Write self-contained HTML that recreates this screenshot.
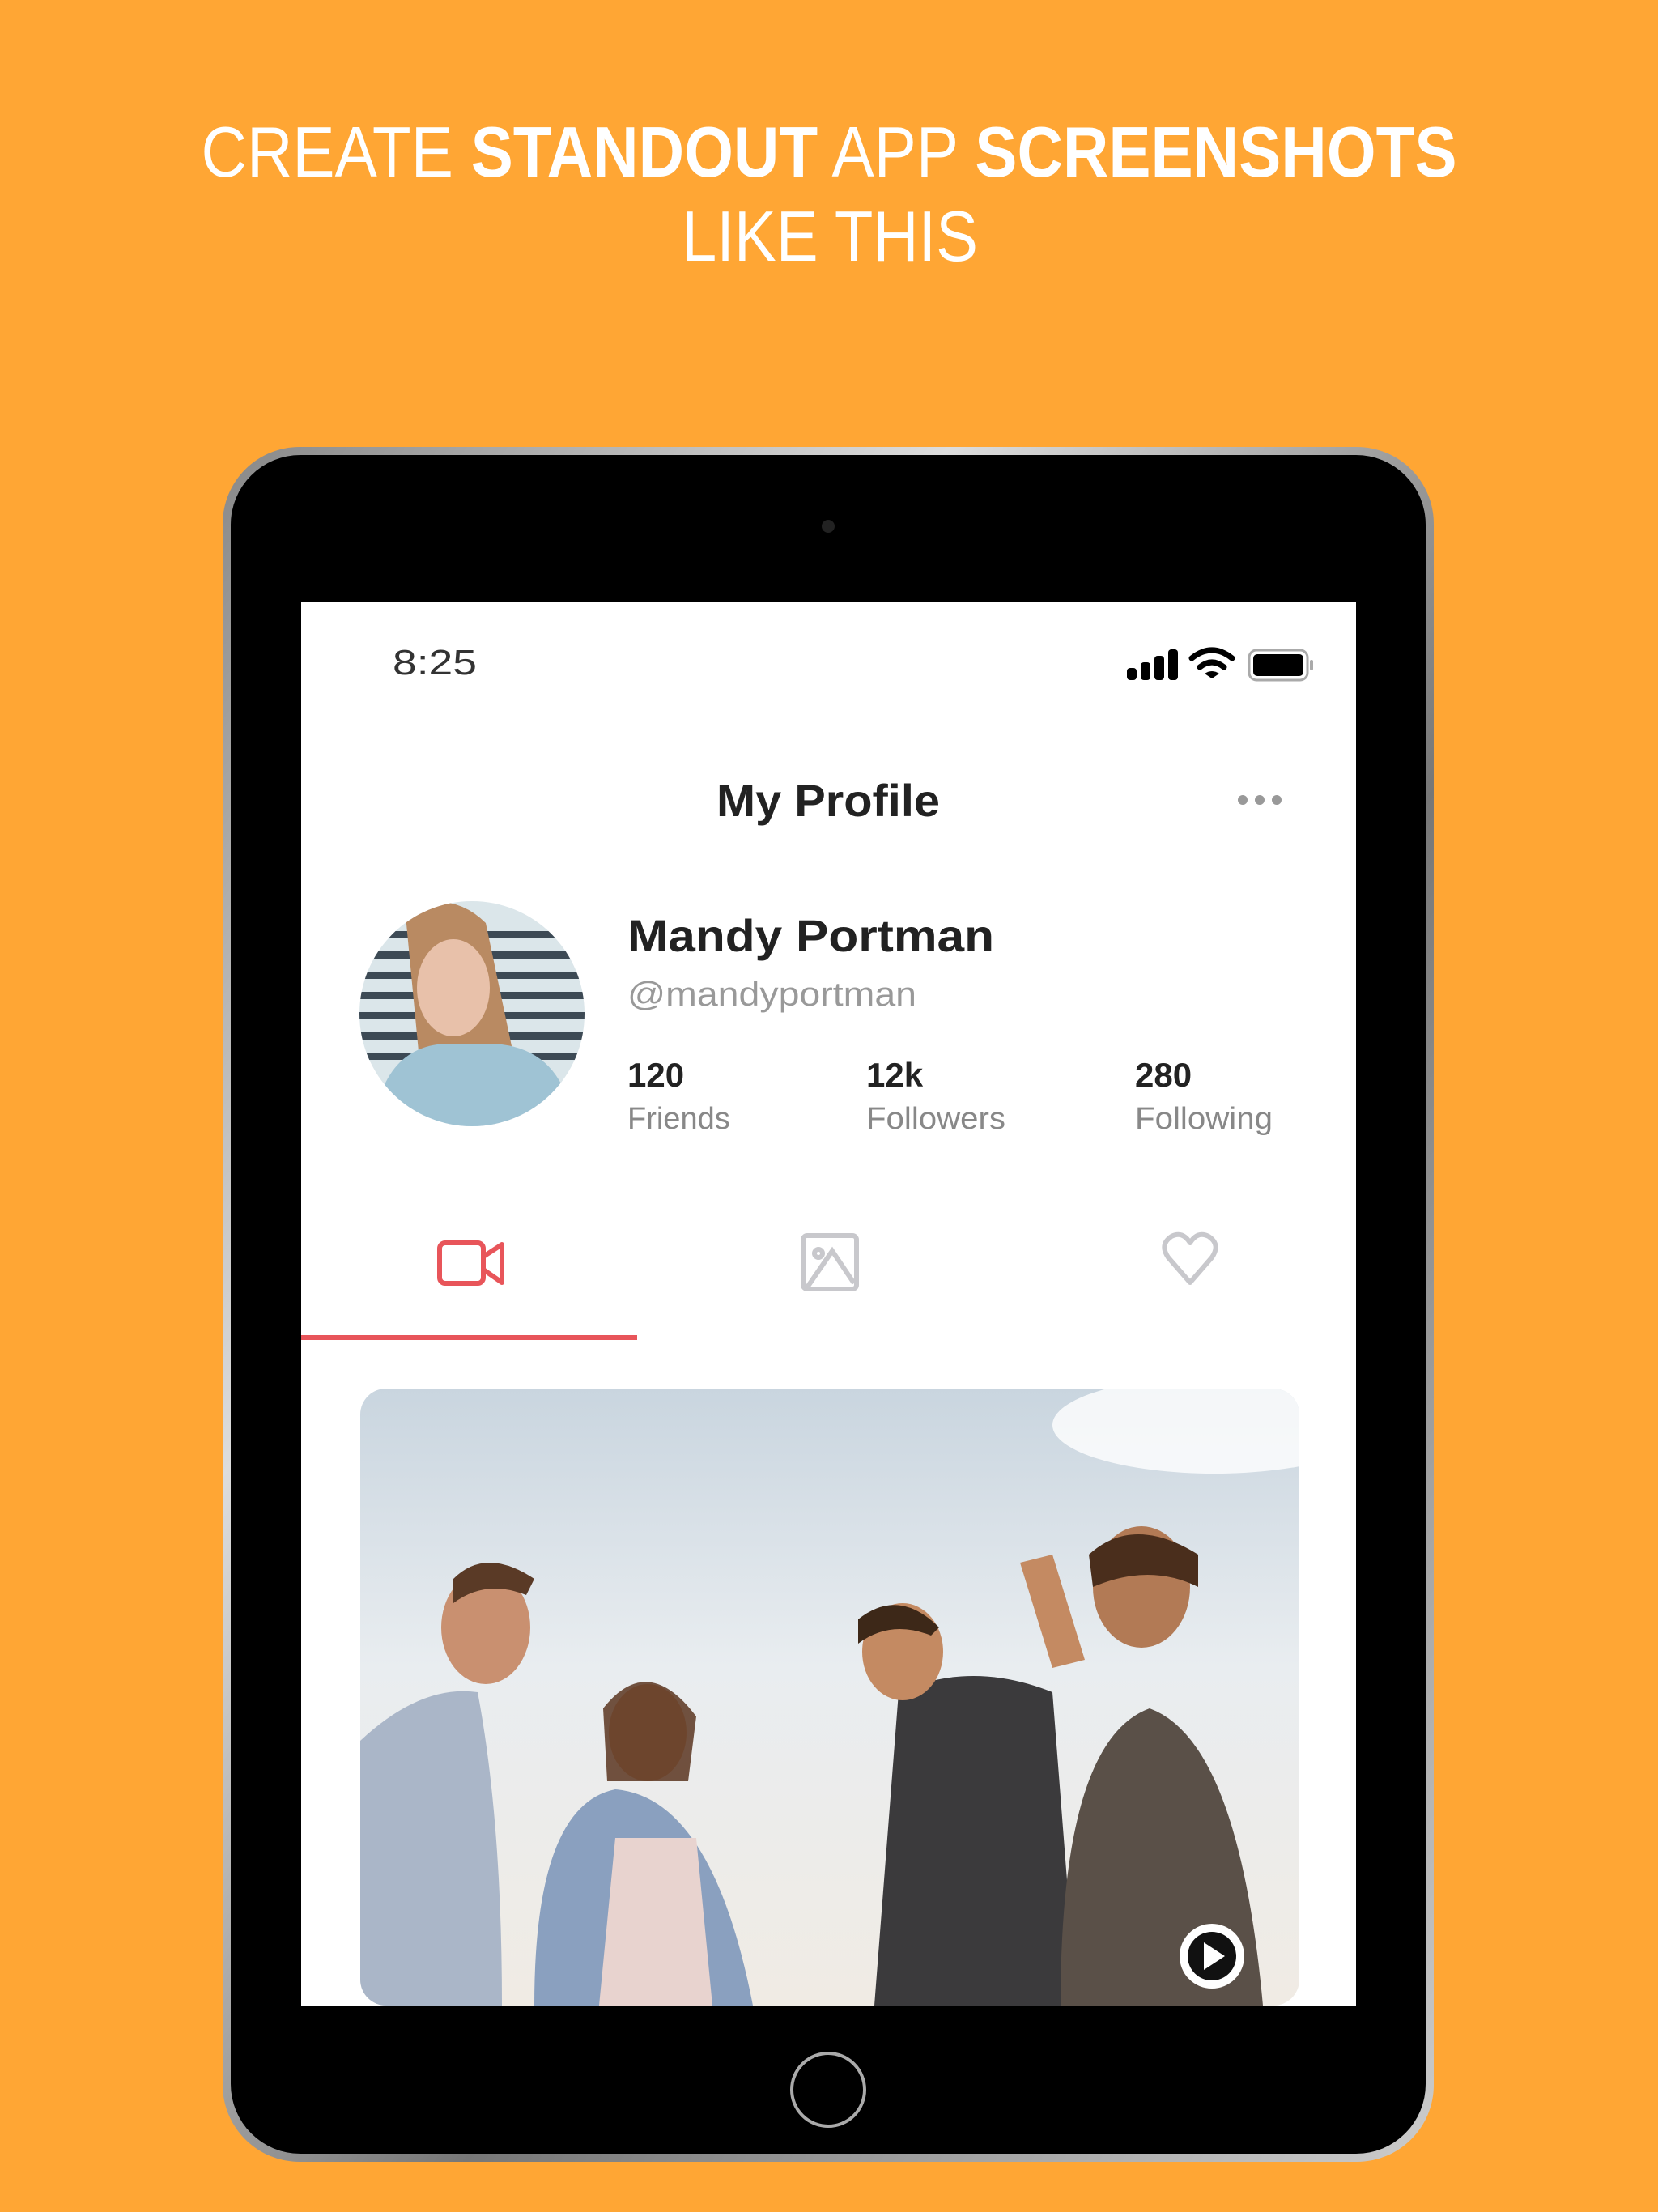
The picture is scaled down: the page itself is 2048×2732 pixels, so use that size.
<!DOCTYPE html>
<html><head><meta charset="utf-8"><style>
html,body{margin:0;padding:0}
body{width:2048px;height:2732px;background:#FFA634;position:relative;overflow:hidden;font-family:"Liberation Sans",sans-serif}
.abs{position:absolute}
</style></head><body>
<svg class="abs" style="left:0;top:0" width="2048" height="2732">
<text x="1024" y="218" text-anchor="middle" fill="#fff" font-family="Liberation Sans" font-size="88" textLength="1551" lengthAdjust="spacingAndGlyphs">CREATE <tspan font-weight="bold">STANDOUT</tspan> APP <tspan font-weight="bold">SCREENSHOTS</tspan></text>
<text x="1025" y="322" text-anchor="middle" fill="#fff" font-family="Liberation Sans" font-size="88" textLength="366" lengthAdjust="spacingAndGlyphs">LIKE THIS</text>
<defs><linearGradient id="rim" x1="0" y1="0" x2="1" y2="1"><stop offset="0" stop-color="#888"/><stop offset=".3" stop-color="#ddd"/><stop offset=".6" stop-color="#777"/><stop offset="1" stop-color="#ccc"/></linearGradient>
<linearGradient id="sky" x1="0" y1="0" x2="0" y2="1"><stop offset="0" stop-color="#c9d5df"/><stop offset=".45" stop-color="#e9edf0"/><stop offset="1" stop-color="#f0ebe4"/></linearGradient>
<clipPath id="card"><rect x="445" y="1715" width="1160" height="762" rx="32"/></clipPath>
<clipPath id="av"><circle cx="583" cy="1252" r="139"/></clipPath></defs>
<rect x="275" y="552" width="1496" height="2118" rx="95" fill="url(#rim)"/>
<rect x="285" y="562" width="1476" height="2098" rx="86" fill="#000"/>
<circle cx="1023" cy="650" r="8" fill="#222"/>
<circle cx="1023" cy="2581" r="45" fill="none" stroke="#aaa" stroke-width="4"/>
<rect x="372" y="743" width="1303" height="1734" fill="#fff"/>
<text x="485" y="833" font-size="44" fill="#333" font-family="Liberation Sans" textLength="104" lengthAdjust="spacingAndGlyphs">8:25</text>
<g fill="#000"><rect x="1392" y="825" width="12" height="15" rx="4"/><rect x="1409" y="818" width="12" height="22" rx="4"/><rect x="1426" y="810" width="12" height="30" rx="4"/><rect x="1443" y="802" width="12" height="38" rx="4"/></g>
<g fill="none" stroke="#000" stroke-width="7" stroke-linecap="round"><path d="M1472 813 Q1497 793 1522 813"/><path d="M1482 824 Q1497 812 1512 824"/></g>
<path d="M1488 832 L1497 838 L1506 832 Q1497 826 1488 832Z" fill="#000"/>
<rect x="1543" y="803" width="72" height="37" rx="9" fill="none" stroke="#aaa" stroke-width="3"/>
<rect x="1548" y="808" width="62" height="27" rx="5" fill="#000"/>
<rect x="1618" y="815" width="4" height="13" rx="2" fill="#aaa"/>
<text x="1023" y="1008" text-anchor="middle" font-size="56" font-weight="bold" fill="#222" textLength="276" lengthAdjust="spacingAndGlyphs">My Profile</text>
<g fill="#999"><circle cx="1535" cy="988" r="6"/><circle cx="1556" cy="988" r="6"/><circle cx="1577" cy="988" r="6"/></g>
<g clip-path="url(#av)"><rect x="440" y="1110" width="290" height="290" fill="#dbe6ea"/>
<g fill="#3d4a55"><rect x="440" y="1150" width="290" height="9"/><rect x="440" y="1175" width="290" height="9"/><rect x="440" y="1200" width="290" height="9"/><rect x="440" y="1225" width="290" height="9"/><rect x="440" y="1250" width="290" height="9"/><rect x="440" y="1275" width="290" height="9"/><rect x="440" y="1300" width="290" height="9"/></g>
<path d="M500 1120 Q560 1100 600 1140 L640 1330 L520 1330 Z" fill="#b98a62"/>
<ellipse cx="560" cy="1220" rx="45" ry="60" fill="#e8c1aa"/>
<path d="M460 1400 Q470 1300 540 1290 L620 1290 Q700 1300 710 1400Z" fill="#9fc3d4"/></g>
<text x="775" y="1175" font-size="56" font-weight="bold" fill="#222" textLength="453" lengthAdjust="spacingAndGlyphs">Mandy Portman</text>
<text x="775" y="1242" font-size="42" fill="#999" textLength="357" lengthAdjust="spacingAndGlyphs">@mandyportman</text>
<g font-size="42" font-weight="bold" fill="#222"><text x="775" y="1342">120</text><text x="1070" y="1342">12k</text><text x="1402" y="1342">280</text></g>
<g font-size="38" fill="#888"><text x="775" y="1394">Friends</text><text x="1070" y="1394" textLength="172" lengthAdjust="spacingAndGlyphs">Followers</text><text x="1402" y="1394" textLength="170" lengthAdjust="spacingAndGlyphs">Following</text></g>
<g fill="none" stroke="#E8555A" stroke-width="6" stroke-linejoin="round"><rect x="543" y="1535" width="54" height="50" rx="7"/><path d="M597 1552 L620 1537 L620 1584 L597 1568"/></g>
<g fill="none" stroke="#c8c8cc" stroke-width="6"><rect x="992" y="1526" width="66" height="66" rx="5"/><circle cx="1011" cy="1548" r="5"/><path d="M997 1590 L1028 1545 L1055 1585"/>
<path d="M1470 1584 L1443 1553 Q1432 1537 1447 1527 Q1461 1520 1470 1535 Q1479 1520 1493 1527 Q1508 1537 1497 1553 Z" stroke-linejoin="round"/></g>
<rect x="372" y="1649" width="415" height="6" fill="#E8555A"/>
<g clip-path="url(#card)">
<rect x="445" y="1715" width="1160" height="762" fill="url(#sky)"/>
<ellipse cx="1500" cy="1760" rx="200" ry="60" fill="#fff" opacity=".8"/>
<path d="M445 2477 L445 2150 Q520 2080 590 2090 Q620 2250 620 2477Z" fill="#aab6c8"/>
<ellipse cx="600" cy="2010" rx="55" ry="70" fill="#c99070"/>
<path d="M560 1950 Q600 1910 660 1950 L650 1970 Q600 1950 560 1980Z" fill="#5a3a26"/>
<path d="M660 2477 Q660 2230 760 2210 Q880 2220 930 2477Z" fill="#8aa0bf"/>
<path d="M740 2477 L760 2270 L860 2270 L880 2477Z" fill="#e8d3cf"/>
<ellipse cx="800" cy="2140" rx="48" ry="60" fill="#d8a07a"/>
<path d="M745 2110 Q800 2040 860 2120 L850 2200 L750 2200Z" fill="#5a3520" opacity=".85"/>
<path d="M1080 2477 L1110 2090 Q1200 2050 1300 2090 L1330 2477Z" fill="#3b3a3c"/>
<ellipse cx="1115" cy="2040" rx="50" ry="60" fill="#c48a62"/>
<path d="M1060 2000 Q1110 1960 1160 2010 L1150 2020 Q1100 2000 1060 2030Z" fill="#3d2818"/>
<path d="M1310 2477 Q1310 2150 1420 2110 Q1530 2150 1560 2477Z" fill="#5a5048"/>
<ellipse cx="1410" cy="1960" rx="60" ry="75" fill="#b27a55"/>
<path d="M1345 1920 Q1400 1870 1480 1920 L1480 1960 Q1420 1930 1350 1960Z" fill="#4a2e1c"/>
<path d="M1260 1930 L1300 1920 L1340 2050 L1300 2060Z" fill="#c48a62"/>
<circle cx="1497" cy="2416" r="40" fill="#fff"/>
<circle cx="1497" cy="2416" r="30" fill="#111"/>
<path d="M1487 2399 L1513 2416 L1487 2433Z" fill="#fff"/>
</g>
</svg>
</body></html>
